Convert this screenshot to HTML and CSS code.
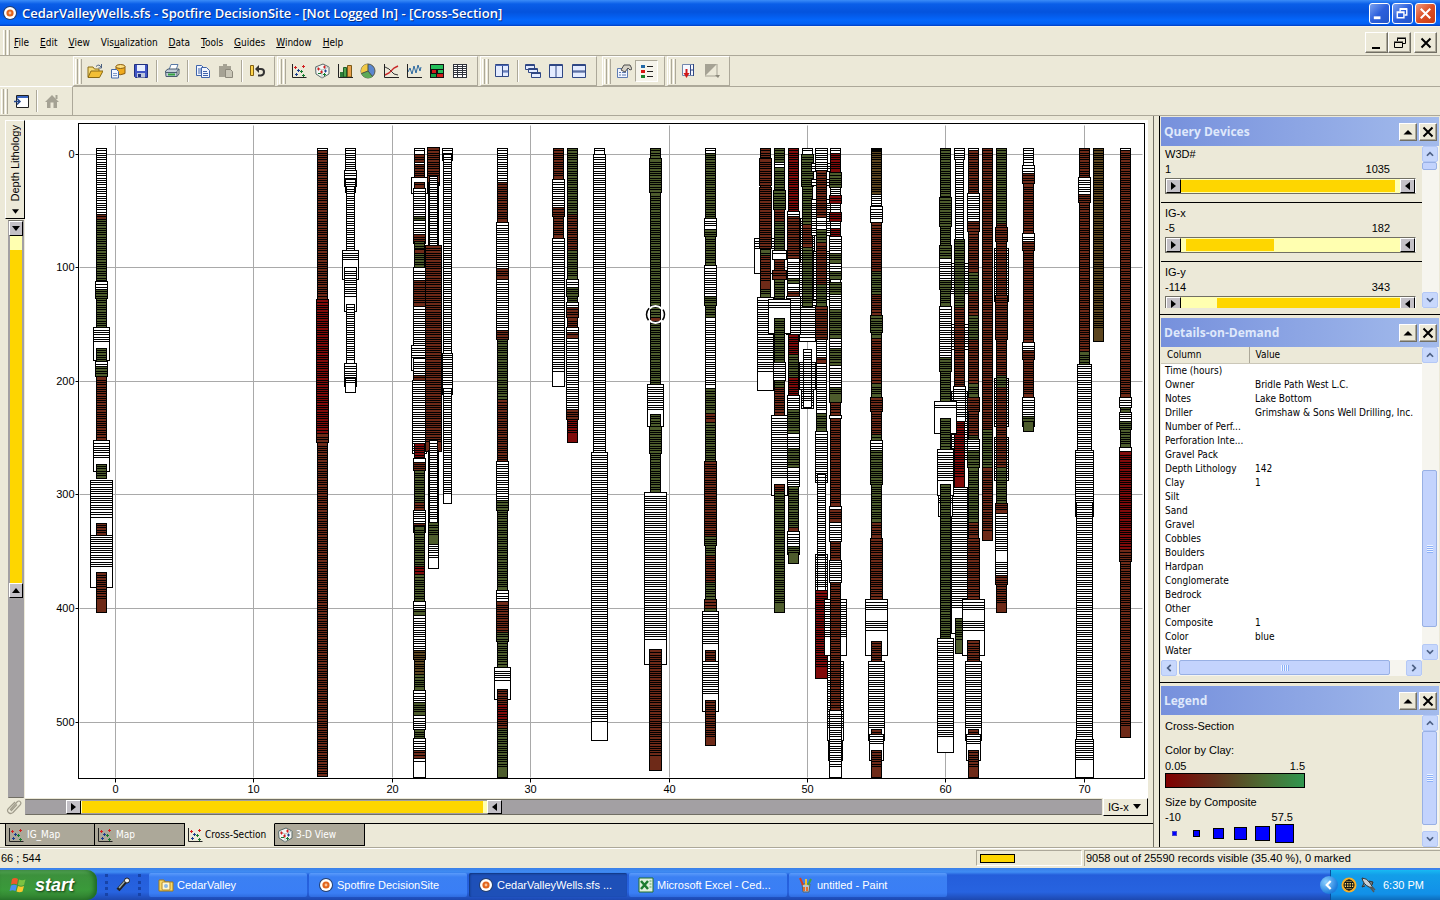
FILE: index.html
```html
<!DOCTYPE html>
<html lang="en">
<head>
    <meta charset="UTF-8">
    <title>CedarValleyWells.sfs - Spotfire DecisionSite</title>
    <link rel="stylesheet" href="styles.css">
</head>
<body>
<svg class="defs" width="0" height="0">
    <symbol id="i-spot" viewBox="0 0 16 16"><circle cx="8" cy="8" r="7" fill="#26406e"/><circle cx="8" cy="8" r="6" fill="#fff"/><circle cx="8" cy="8" r="3.6" fill="#e2641c"/><circle cx="8" cy="8" r="1.4" fill="#f7c39a"/></symbol>
    <symbol id="i-scatter" viewBox="0 0 16 16"><path d="M1.5 1v13.500h14" fill="none" stroke="#222"/><path d="M3 4.500h3M4.500 3v3M11 3.500h3M12.500 2v3" stroke="#d02020"/><path d="M6 7.500h3M7.500 6v3M4 11.500h3M5.500 10v3" stroke="#1a3c8c"/><path d="M9 8.500h3M10.500 7v3M11 12.500h3M12.500 11v3" stroke="#157a30"/></symbol>
    <symbol id="i-cube" viewBox="0 0 16 16"><path d="M1.500 4 9 1l6 3v7l-7 4-6-4z" fill="#f4f6f4" stroke="#5a6a68"/><path d="M1.500 4 8 7l7-3M8 7v8" fill="none" stroke="#b4c0bc"/><path d="M3 6h3M4.500 4.500v3M9 4h3M10.500 2.500v3M6 9h3M7.500 7.500v3" stroke="#d02020"/><path d="M10 8h3M11.500 6.500v3" stroke="#1a3c8c"/><path d="M4 10.500h3M9 11.500h3M10.500 10v3" stroke="#157a30"/></symbol>
    <symbol id="i-up" viewBox="0 0 16 16"><path d="M4.500 10 8 6.500l3.500 3.500" fill="none" stroke="#4d6185" stroke-width="2"/></symbol>
    <symbol id="i-tri" viewBox="0 0 16 16"><path d="M3.500 10.500h9L8 6z"/></symbol>
    <symbol id="i-x" viewBox="0 0 16 16"><path d="M3.500 3.500l9 9m0-9-9 9" stroke="#000" stroke-width="2"/></symbol>
</svg>

<header class="titlebar">
    <svg class="ic"><use href="#i-spot"/></svg>
    <h1>CedarValleyWells.sfs - Spotfire DecisionSite - [Not Logged In] - [Cross-Section]</h1>
    <button class="win" aria-label="Minimize"><svg viewBox="0 0 20 20"><path d="M4 14.500h7" stroke="#fff" stroke-width="3"/></svg></button>
    <button class="win" aria-label="Restore"><svg viewBox="0 0 20 20" fill="none" stroke="#fff"><path d="M7.500 8V5.500h7v6H12M7 5h8" stroke-width="1.500"/><path d="M4.500 8.500h7v6h-7zM4 9h8" stroke-width="1.500"/></svg></button>
    <button class="win close" aria-label="Close"><svg viewBox="0 0 20 20"><path d="M5 5l10 10m0-10L5 15" stroke="#fff" stroke-width="2.200"/></svg></button>
</header>

<nav class="menubar">
    <i class="grip"></i>
    <a href="#"><u>F</u>ile</a><a href="#"><u>E</u>dit</a><a href="#"><u>V</u>iew</a><a href="#">Vis<u>u</u>alization</a><a href="#"><u>D</u>ata</a><a href="#"><u>T</u>ools</a><a href="#"><u>G</u>uides</a><a href="#"><u>W</u>indow</a><a href="#"><u>H</u>elp</a>
    <span class="mdi">
        <button class="raised" aria-label="Minimize window"><svg class="ic" viewBox="0 0 16 16"><path d="M3 13h8" stroke="#000" stroke-width="2"/></svg></button>
        <button class="raised" aria-label="Restore window"><svg class="ic" viewBox="0 0 16 16" fill="none" stroke="#000"><path d="M5.500 6V3.500h8v5H11M5 3h9M2.500 7.500h8v5h-8zM2 7h9"/></svg></button>
        <button class="raised last" aria-label="Close window"><svg class="ic"><use href="#i-x"/></svg></button>
    </span>
</nav>

<div class="toolbar">
    <div class="group">
        <i class="grip"></i>
        <button aria-label="Open"><svg class="ic" viewBox="0 0 16 16"><path d="M1 14V4h5l1.500 2H12v2" fill="#f6dc78" stroke="#8a6a14"/><path d="M1 14.500 4 8h12l-3.500 6.500z" fill="#f2bf35" stroke="#8a6a14"/><path d="M9 3.500q3-3 5 .5M14.500 1v4h-3" fill="none" stroke="#4a5f80"/></svg></button>
        <button aria-label="Open database"><svg class="ic" viewBox="0 0 16 16"><path d="M6 3.500v7q4 2.500 9 0v-7" fill="#f0aa1c" stroke="#8a5c10"/><ellipse cx="10.500" cy="3.500" rx="4.500" ry="2" fill="#ffe080" stroke="#8a5c10"/><path d="M1.500 6.500h5l2 2v6.500h-7z" fill="#f4f7ff" stroke="#4468a8"/><path d="M3 10.500h4M3 12.500h4" stroke="#7f9bcb"/></svg></button>
        <button aria-label="Save"><svg class="ic" viewBox="0 0 16 16"><path d="M1.500 1.500h13v13h-12l-1-1z" fill="#4055c4" stroke="#20307e"/><path d="M4 2h8v6H4z" fill="#e8efff"/><path d="M4 10h8v4.500H4z" fill="#bcc6dc"/><path d="M5 11h3v3H5z" fill="#20307e"/></svg></button>
        <i class="sep"></i>
        <button aria-label="Print"><svg class="ic" viewBox="0 0 16 16"><path d="M5 7 7 1.500h7L12 7z" fill="#fff" stroke="#5878a4"/><path d="M1.500 8 4 6h11l-2 2.500v5h-11z" fill="#c3cdd8" stroke="#485c70"/><path d="M2 9.500h11" stroke="#485c70"/><path d="M4 11.500h7" stroke="#33a340" stroke-width="2"/><path d="M13 13.500 15 11V6" fill="none" stroke="#485c70"/></svg></button>
        <i class="sep"></i>
        <button aria-label="Copy"><svg class="ic" viewBox="0 0 16 16" fill="#f2f6ff" stroke="#3f64aa"><path d="M1.500 2.500h5l3 3v7h-8z"/><path d="M3 6h4M3 8h4M3 10h4"/><path d="M6.500 4.500h5l3 3v7h-8z"/><path d="M8 8.500h4M8 10.500h5M8 12.500h5"/></svg></button>
        <button aria-label="Paste" disabled><svg class="ic" viewBox="0 0 16 16"><path d="M1 3h4V1h4v2h4v11H1z" fill="#a5a294"/><path d="M7.500 6.500h5l2 2v6h-7z" fill="#c9c6b7" stroke="#8c897c"/></svg></button>
        <i class="sep"></i>
        <button aria-label="Undo"><svg class="ic" viewBox="0 0 16 16"><path d="M1.500 2.500h3v10h-3z" fill="#ffd54a" stroke="#806014"/><path d="M7 6h5q3 0 3 3t-3 3.500H9" fill="none" stroke="#333" stroke-width="2"/><path d="M10 2 6 6l4 4z" fill="#333"/></svg></button>
    </div>
    <div class="group">
        <i class="grip"></i>
        <button aria-label="Scatter plot"><svg class="ic"><use href="#i-scatter"/></svg></button>
        <button aria-label="3D scatter plot"><svg class="ic"><use href="#i-cube"/></svg></button>
        <button aria-label="Bar chart"><svg class="ic" viewBox="0 0 16 16"><path d="M3 9h3v5H3z" fill="#2f7d3c"/><path d="M6.500 4.500h3V14h-3z" fill="#4ea24c" stroke="#205c28"/><path d="M10.500 2.500h4V14h-4z" fill="#eaa04a" stroke="#7a5a18"/><path d="M1.500 1v13.500H16" fill="none" stroke="#222"/></svg></button>
        <button aria-label="Pie chart"><svg class="ic" viewBox="0 0 16 16"><circle cx="8" cy="8" r="7" fill="#5a86cf" stroke="#5a5a48"/><path d="M8 8V1a7 7 0 0 0-6.500 9.500z" fill="#f1c945"/><path d="M8 8l-6.500 2.500a7 7 0 0 0 11 3z" fill="#5ca956"/><path d="M8 1v7l4.500 5.500M8 8l-6.500 2.500" fill="none" stroke="#4a5340"/></svg></button>
        <button aria-label="Line chart"><svg class="ic" viewBox="0 0 16 16" fill="none"><path d="M2 4l4 2 5 5 4 1" stroke="#333"/><path d="M2 12l4-2 5-5 4-2" stroke="#c82828" stroke-width="1.400"/><path d="M1.500 1v13.500H16" stroke="#222"/></svg></button>
        <button aria-label="Profile chart"><svg class="ic" viewBox="0 0 16 16" fill="none"><path d="M2 9l2-4 2 6 2-8 2 7 2-8 2 6 1-4" stroke="#2a68a0"/><path d="M1.500 1v13.500H16" stroke="#222"/></svg></button>
        <button aria-label="Heat map"><svg class="ic" viewBox="0 0 16 16"><path d="M1 1h14v14H1z" fill="#111"/><path d="M2 2h12v4H2zM9 7h5v3H9z" fill="#24c05a"/><path d="M2 11h5v3H2z" fill="#15a045"/><path d="M3 7h4v3H3zM8 11h6v3H8z" fill="#d41c1c"/></svg></button>
        <button aria-label="Table"><svg class="ic" viewBox="0 0 16 16"><path d="M1 1h14v14H1z" fill="#fff"/><path d="M1.500 1v14M5.500 1v14M10.500 1v14M14.500 1v14M1 1.500h14M1 3.500h14M1 5.500h14M1 7.500h14M1 9.500h14M1 11.500h14M1 14.500h14" stroke="#30343c"/></svg></button>
    </div>
    <div class="group">
        <i class="grip"></i>
        <button aria-label="Auto tile"><svg class="ic" viewBox="0 0 16 16" fill="#e4ecff" stroke="#2f4784"><path d="M1.500 1.500h13v12h-13zM8.500 2v12M8.500 8h6"/><path d="M1 2.500h14M8.500 9h6" stroke="#4a66b4"/></svg></button>
        <i class="sep"></i>
        <button aria-label="Cascade"><svg class="ic" viewBox="0 0 16 16" fill="#e4ecff" stroke="#2f4784"><path d="M.5 1.500h9v5h-9zM1 2.500h9M3.500 5.500h9v4h-9zM3 6.500h10M6.500 9.500h9v5h-9zM6 10.500h10"/></svg></button>
        <button aria-label="Tile vertically"><svg class="ic" viewBox="0 0 16 16" fill="#e4ecff" stroke="#2f4784"><path d="M1.500 1.500h13v13h-13zM8 2v12M1 2.500h14"/></svg></button>
        <button aria-label="Tile horizontally"><svg class="ic" viewBox="0 0 16 16" fill="#e4ecff" stroke="#2f4784"><path d="M1.500 1.500h13v13h-13zM1 8h14M1 2.500h14M1 9h14"/></svg></button>
    </div>
    <div class="group apart">
        <i class="grip"></i>
        <button aria-label="Properties"><svg class="ic" viewBox="0 0 16 16"><path d="M1.500 5.500h10v9h-10z" fill="#f2f6ff" stroke="#5f7db2"/><path d="M3 9.500h2M6 9.500h4M3 12h2M6 12h4" stroke="#5f7db2"/><path d="M5 7 8 2h6l2 4-2 1-2-2-3 4z" fill="#d6d2c6" stroke="#4c4c4c"/></svg></button>
        <button class="pressed" aria-label="Legend"><svg class="ic" viewBox="0 0 16 16"><path d="M2 2h4v3H2z" fill="#2268a8"/><path d="M2 7h4v3H2z" fill="#d81414"/><path d="M2 12h4v3H2z" fill="#17802c"/><path d="M8 3.500h6M8 8.500h6M8 13.500h6" stroke="#222"/></svg></button>
    </div>
    <div class="group">
        <i class="grip"></i>
        <button aria-label="Export"><svg class="ic" viewBox="0 0 16 16"><path d="M1.500 1.500h11v11h-11z" fill="#f6f8ff" stroke="#7286ac"/><path d="M9.500 2v10M9.500 7h3M12.500 1v12" stroke="#2f4784"/><path d="M5.500 6v6" stroke="#d01818" stroke-width="2"/><path d="M2.500 10h6l-3 5z" fill="#d01818"/></svg></button>
        <button aria-label="Mark" disabled><svg class="ic" viewBox="0 0 16 16"><path d="M1 1h12L1 13z" fill="#a5a294"/><path d="M13 1v12H1" fill="none" stroke="#a5a294"/><path d="M11 12h5l-2 3z" fill="#8c897c"/></svg></button>
    </div>
</div>

<div class="toolbar guide">
    <div class="group">
        <i class="grip"></i>
        <button aria-label="Show guide"><svg class="ic" viewBox="0 0 16 16"><path d="M3.500 2.500h12v12h-12z" fill="#fff" stroke="#222"/><path d="M4 4h11" stroke="#3864c0" stroke-width="2"/><path d="M1 8.500h5M4 5.500l3 3-3 3" fill="none" stroke="#24478c" stroke-width="1.500"/></svg></button>
        <i class="sep"></i>
        <button aria-label="Home" disabled><svg class="ic" viewBox="0 0 16 16"><path d="M8 2l7 7h-2v6H3V9H1z" fill="#a5a294"/><path d="M6.500 9.500h3V15h-3z" fill="#ece9d8"/><path d="M12.500 2v4" stroke="#a5a294" stroke-width="2"/></svg></button>
    </div>
</div>

<main>
    <section class="view">
        <div class="yaxis">
            <button class="axis-label"><span>Depth Lithology</span><svg viewBox="0 0 8 5" width="7" height="5"><path d="M0 0h8L4 5z"/></svg></button>
            <div class="range vertical">
                <div class="span" style="top:0;height:64%"></div>
                <div class="fill" style="top:5%;height:58%"></div>
                <input class="lo" type="range" step="any" value="0" aria-label="Depth from">
                <input class="hi" type="range" step="any" value="64.500" aria-label="Depth to">
            </div>
        </div>
        <svg class="chart" id="chart" role="img" aria-label="Depth Lithology by IG-x"></svg>
        <svg class="ic clip" viewBox="0 0 16 16"><path d="M4 11 11 3q2-2 3.500 0 1 1.500-.5 3L7 13.500q-2.500 2-4.500 0t0-4L9 3M5 12l6-6.500" fill="none" stroke="#a09c8c" stroke-width="1.200"/></svg>
        <div class="xaxis">
            <div class="range dark">
                <div class="span" style="left:4%;width:40%"></div>
                <div class="fill" style="left:5.200%;width:37.300%"></div>
                <input class="lo" type="range" step="any" value="3.800" aria-label="IG-x from">
                <input class="hi" type="range" step="any" value="43.500" aria-label="IG-x to">
            </div>
            <label class="pick"><select aria-label="X axis"><option>IG-x</option></select></label>
        </div>
        <div class="tabs">
            <button><svg class="ic"><use href="#i-scatter"/></svg>IG_Map</button>
            <button><svg class="ic"><use href="#i-scatter"/></svg>Map</button>
            <button class="on"><svg class="ic"><use href="#i-scatter"/></svg>Cross-Section</button>
            <button><svg class="ic"><use href="#i-cube"/></svg>3-D View</button>
        </div>
    </section>

    <aside>
        <section class="panel query">
            <header><h2>Query Devices</h2><button class="raised" aria-label="Collapse"><svg class="ic"><use href="#i-tri"/></svg></button><button class="raised" aria-label="Close"><svg class="ic"><use href="#i-x"/></svg></button></header>
            <div class="body">
                <div class="devices">
                    <div class="device">
                        <h3>W3D#</h3>
                        <p><span>1</span><span>1035</span></p>
                        <div class="range"><div class="span" style="left:0;width:100%"></div><div class="fill" style="left:6%;width:86%"></div>
                            <input class="lo" type="range" value="0" aria-label="W3D# from"><input class="hi" type="range" value="100" aria-label="W3D# to"></div>
                    </div>
                    <div class="device">
                        <h3>IG-x</h3>
                        <p><span>-5</span><span>182</span></p>
                        <div class="range"><div class="span" style="left:0;width:100%"></div><div class="fill" style="left:8%;width:35.500%"></div>
                            <input class="lo" type="range" value="0" aria-label="IG-x from"><input class="hi" type="range" value="100" aria-label="IG-x to"></div>
                    </div>
                    <div class="device">
                        <h3>IG-y</h3>
                        <p><span>-114</span><span>343</span></p>
                        <div class="range"><div class="span" style="left:0;width:100%"></div><div class="fill" style="left:20.500%;width:74%"></div>
                            <input class="lo" type="range" value="0" aria-label="IG-y from"><input class="hi" type="range" value="100" aria-label="IG-y to"></div>
                    </div>
                </div>
                <div class="scroll"><button aria-label="Scroll up"><svg class="ic"><use href="#i-up"/></svg></button><i class="thumb short"></i><button class="down" aria-label="Scroll down"><svg class="ic"><use href="#i-up"/></svg></button></div>
            </div>
        </section>

        <section class="panel details">
            <header><h2>Details-on-Demand</h2><button class="raised" aria-label="Collapse"><svg class="ic"><use href="#i-tri"/></svg></button><button class="raised" aria-label="Close"><svg class="ic"><use href="#i-x"/></svg></button></header>
            <div class="body">
                <div class="list">
                    <table>
                        <thead><tr><th>Column</th><th>Value</th></tr></thead>
                        <tbody>
                            <tr><td>Time (hours)</td><td></td></tr>
                            <tr><td>Owner</td><td>Bridle Path West L.C.</td></tr>
                            <tr><td>Notes</td><td>Lake Bottom</td></tr>
                            <tr><td>Driller</td><td>Grimshaw &amp; Sons Well Drilling, Inc.</td></tr>
                            <tr><td>Number of Perf...</td><td></td></tr>
                            <tr><td>Perforation Inte...</td><td></td></tr>
                            <tr><td>Gravel Pack</td><td></td></tr>
                            <tr><td>Depth Lithology</td><td>142</td></tr>
                            <tr><td>Clay</td><td>1</td></tr>
                            <tr><td>Silt</td><td></td></tr>
                            <tr><td>Sand</td><td></td></tr>
                            <tr><td>Gravel</td><td></td></tr>
                            <tr><td>Cobbles</td><td></td></tr>
                            <tr><td>Boulders</td><td></td></tr>
                            <tr><td>Hardpan</td><td></td></tr>
                            <tr><td>Conglomerate</td><td></td></tr>
                            <tr><td>Bedrock</td><td></td></tr>
                            <tr><td>Other</td><td></td></tr>
                            <tr><td>Composite</td><td>1</td></tr>
                            <tr><td>Color</td><td>blue</td></tr>
                            <tr><td>Water</td><td></td></tr>
                            <tr><td>Type of Water L...</td><td>FALSE</td></tr>
                        </tbody>
                    </table>
                </div>
                <div class="scroll"><button aria-label="Scroll up"><svg class="ic"><use href="#i-up"/></svg></button><i class="thumb mid"></i><button class="down" aria-label="Scroll down"><svg class="ic"><use href="#i-up"/></svg></button></div>
            </div>
            <div class="scroll across"><button class="left" aria-label="Scroll left"><svg class="ic"><use href="#i-up"/></svg></button><i class="thumb"></i><button class="right" aria-label="Scroll right"><svg class="ic"><use href="#i-up"/></svg></button></div>
        </section>

        <section class="panel legend">
            <header><h2>Legend</h2><button class="raised" aria-label="Collapse"><svg class="ic"><use href="#i-tri"/></svg></button><button class="raised" aria-label="Close"><svg class="ic"><use href="#i-x"/></svg></button></header>
            <div class="body">
                <div class="keys">
                    <h3>Cross-Section</h3>
                    <h3>Color by Clay:</h3>
                    <p><span>0.05</span><span>1.5</span></p>
                    <div class="ramp"></div>
                    <h3>Size by Composite</h3>
                    <p class="sizes"><span>-10</span><span>57.5</span></p>
                    <svg class="squares" viewBox="0 0 132 20" width="132" height="20"><g fill="#00f" stroke="#000"><rect x="7.500" y="7.500" width="4" height="4" stroke="#44c"/><rect x="28.500" y="6.500" width="6" height="6"/><rect x="48.500" y="4.500" width="10" height="10"/><rect x="69.500" y="3.500" width="12" height="12"/><rect x="90.500" y="2.500" width="14" height="14"/><rect x="110.500" y=".5" width="18" height="18"/></g></svg>
                </div>
                <div class="scroll"><button aria-label="Scroll up"><svg class="ic"><use href="#i-up"/></svg></button><i class="thumb tall"></i><button class="down" aria-label="Scroll down"><svg class="ic"><use href="#i-up"/></svg></button></div>
            </div>
        </section>
    </aside>
</main>

<div class="status">
    <span>66 ; 544</span>
    <span class="gauge"><i></i></span>
    <span class="records">9058 out of 25590 records visible (35.40 %), 0 marked</span>
</div>

<footer class="taskbar">
    <button class="start"><svg viewBox="0 0 20 18"><path d="M3 3q3-2 6 0L8 8.500q-3-1.500-6 0z" fill="#ee5a2a"/><path d="M10 3.500q3 1.500 6.500 0L15 9q-3 1.500-6 0z" fill="#7cc242"/><path d="M2 9.500q3-1.500 6 0L6.500 15q-3-1.500-6 0z" fill="#4a8ff0"/><path d="M9 10q3 1.500 6 0l-1.500 5.500q-3 1.500-6 0z" fill="#fbc82e"/></svg>start</button>
    <div class="quick"><svg class="ic" viewBox="0 0 16 16"><path d="M3 13 11 4" stroke="#222" stroke-width="4"/><path d="M4 11l6-7" stroke="#9aa" stroke-width="1.500"/><circle cx="12" cy="3.500" r="2.500" fill="#f2f2f2" stroke="#222"/></svg></div>
    <button class="task"><svg class="ic" viewBox="0 0 16 16"><path d="M1 3h5l1 2h8v9H1z" fill="#f8d868" stroke="#a07a18"/><rect x="4" y="5" width="8" height="8" rx="1" fill="#fff7d0" stroke="#b58b28"/><circle cx="8" cy="9" r="2" fill="#8bb8e8"/></svg>CedarValley</button>
    <button class="task"><svg class="ic"><use href="#i-spot"/></svg>Spotfire DecisionSite</button>
    <button class="task on"><svg class="ic"><use href="#i-spot"/></svg>CedarValleyWells.sfs ...</button>
    <button class="task"><svg class="ic" viewBox="0 0 16 16"><path d="M1 1h14v14H1z" fill="#dff0dc" stroke="#22702e"/><path d="M3 4l7 8M10 4l-7 8" stroke="#1e7c30" stroke-width="2.500"/><path d="M11.500 4h2M11.500 7h2M11.500 10h2" stroke="#58a060"/></svg>Microsoft Excel - Ced...</button>
    <button class="task"><svg class="ic" viewBox="0 0 16 16"><path d="M4 7h8l-1 8H5z" fill="#b8c4cc" stroke="#56626a"/><path d="M5 8 2 1" stroke="#d04020" stroke-width="2"/><path d="M8 8V2" stroke="#f0c030" stroke-width="2"/><path d="M10 8l3-6" stroke="#40a040" stroke-width="2"/><path d="M6 10v4M9 10v4" stroke="#e07030" stroke-width="2"/></svg>untitled - Paint</button>
    <div class="tray">
        <button class="chev" aria-label="Show hidden icons"><svg viewBox="0 0 16 16"><path d="M9.500 4.500 6 8l3.500 3.500" fill="none" stroke="#fff" stroke-width="2"/></svg></button>
        <svg class="ic" viewBox="0 0 16 16"><circle cx="8" cy="8" r="7.500" fill="#f6b02a"/><circle cx="8" cy="8" r="5" fill="#ffd86e" stroke="#111"/><path d="M3 8h10M8 3v10M4 5.500h8M4 10.500h8" stroke="#111"/><ellipse cx="8" cy="8" rx="2.500" ry="5" fill="none" stroke="#111"/></svg>
        <svg class="ic" viewBox="0 0 16 16"><path d="M2 1q5 0 8 5l3 5-4-1Q3 7 2 1z" fill="#c9ced4" stroke="#333"/><path d="M4 6 2 10l3-1M9 4l4 1-1 3" fill="#777" stroke="#333"/><path d="M10 10l4 5M12 10l3 3" stroke="#555" stroke-width="1.500"/></svg>
        <time>6:30 PM</time>
    </div>
</footer>
<script src="chart.js"></script>
</body>
</html>
```
FILE: styles.css
```css
*{
    box-sizing: border-box;
    margin: 0;
    padding: 0;
}
body{
    display: flex;
    flex-direction: column;
    height: 100vh;
    overflow: hidden;
    background: #ece9d8;
    color: #000;
    font: 11px/14px "Liberation Sans", Arial, sans-serif;
}
button, select, input{
    font: inherit;
    color: inherit;
    border: 0;
    background: none;
}
h1, h2, h3{
    font-size: inherit;
    font-weight: normal;
}
.defs{
    position: absolute;
}
.ic{
    display: block;
    flex: none;
    width: 16px;
    height: 16px;
}
.raised{
    display: flex;
    align-items: center;
    justify-content: center;
    background: #ece9d8;
    border: 1px solid;
    border-color: #fff #716f64 #716f64 #fff;
    box-shadow: inset -1px -1px #aca899;
}
.menubar, .list, .tabs button{
    font-family: "DejaVu Sans Condensed", "DejaVu Sans", sans-serif;
    font-size: 10px;
}

/* title bar */
.titlebar{
    display: flex;
    align-items: center;
    flex: none;
    height: 27px;
    padding: 0 4px 0 2px;
    gap: 2px;
    background: linear-gradient(#3b8cf8 0, #0a5ee8 4px, #0453dd 12px, #0466fb 20px, #0260f4 24px, #003cc0);
    border-bottom: 1px solid #f4f2e8;
}
.titlebar h1{
    flex: 1;
    padding-left: 2px;
    color: #fff;
    font: 600 13px/18px "Open Sans", sans-serif;
    text-shadow: 1px 1px #0a2f86;
}
.win{
    width: 21px;
    height: 21px;
    border: 1px solid #fff;
    border-radius: 3px;
    background: linear-gradient(135deg, #7ba2f0, #2c5fdc 50%, #2456c8);
}
.win svg{
    display: block;
}
.win.close{
    background: linear-gradient(135deg, #f09a80, #dc4e24 50%, #c83c14);
}

/* menu and toolbars */
.menubar{
    display: flex;
    align-items: center;
    flex: none;
    height: 29px;
    padding-left: 3px;
    padding-top: 3px;
    border-bottom: 1px solid #aca899;
}
.menubar a{
    margin-right: 11px;
    color: #000;
    text-decoration: none;
}
.grip{
    flex: none;
    width: 11px;
    height: 25px;
    background: linear-gradient(90deg, #fff 1px, #ece9d8 1px 2px, #aca899 2px 3px, transparent 3px 4px, #fff 4px 5px, #ece9d8 5px 6px, #aca899 6px 7px, transparent 7px);
}
.mdi{
    display: flex;
    margin-left: auto;
    padding-right: 3px;
}
.mdi .raised{
    width: 23px;
    height: 21px;
}
.mdi .last{
    margin-left: 3px;
}
.toolbar{
    display: flex;
    flex: none;
    gap: 2px;
    height: 30px;
    padding-left: 73px;
}
.group{
    display: flex;
    align-items: center;
    padding-right: 6px;
    border: 1px solid;
    border-color: #fff #aca899 #aca899 #fff;
}
.group.apart{
    margin-left: 3px;
}
.group button{
    display: flex;
    align-items: center;
    justify-content: center;
    width: 23px;
    height: 22px;
}
.group .pressed{
    background: #f6f4ec;
    border: 1px solid;
    border-color: #aca899 #fff #fff #aca899;
}
.sep{
    width: 8px;
    height: 22px;
    background: linear-gradient(90deg, transparent 4px, #aca899 4px 5px, #fff 5px 6px, transparent 6px);
}
.toolbar .grip{
    width: 8px;
    margin-left: 1px;
}
.guide{
    padding-left: 0;
    border-bottom: 1px solid #aca899;
    background: linear-gradient(#aca899, #aca899) 73px 0 / 100% 1px no-repeat;
}
.guide .group{
    width: 73px;
    border-left: 0;
    border-bottom: 0;
}

/* visualization */
main{
    display: grid;
    grid-template-columns: 1fr 281px;
    flex: 1;
    min-height: 0;
    gap: 5px;
}
.view{
    display: grid;
    grid-template: 1fr 18px 7px 24px / 20px 1fr;
    padding: 4px 0 0 5px;
    border-right: 1px solid #716f64;
}
.yaxis{
    display: flex;
    flex-direction: column;
}
.axis-label{
    display: flex;
    flex-direction: column;
    align-items: center;
    justify-content: center;
    gap: 8px;
    height: 99px;
    background: #ece9d8;
    border: 1px solid;
    border-color: #fff #000 #000 #fff;
}
.axis-label span{
    writing-mode: vertical-rl;
    transform: rotate(180deg);
    white-space: nowrap;
}
.chart{
    display: block;
    width: calc(100% - 5px);
    height: 100%;
    background: #fff;
}
.chart text{
    font-size: 11px;
}
.clip{
    margin: 1px;
}
.xaxis{
    display: flex;
    padding-right: 5px;
}
.xaxis .range{
    flex: 1;
    margin: 1px 1px 1px 0;
}
.pick{
    width: 45px;
    border: 1px solid;
    border-color: #fff #000 #000 #fff;
}
.pick select{
    width: 100%;
    height: 100%;
    padding-left: 4px;
    appearance: none;
    background: url("data:image/svg+xml,%3Csvg xmlns='http://www.w3.org/2000/svg' width='8' height='5'%3E%3Cpath d='M0 0h8L4 5z'/%3E%3C/svg%3E") 29px 5px no-repeat;
}
.range{
    position: relative;
    height: 16px;
    border: 1px solid;
    border-color: #716f64 #fff #716f64 #716f64;
    background: #ffffb0;
    overflow: hidden;
}
.range.dark, .range.vertical{
    background: #a3a0a3;
    border-color: #716f64 #a3a0a3;
}
.range .span, .range .fill{
    position: absolute;
    top: 1px;
    bottom: 1px;
    background: #ffffb0;
}
.range .fill{
    background: #fed600;
}
.range input{
    position: absolute;
    top: 0;
    left: 0;
    width: 100%;
    height: 100%;
    appearance: none;
    pointer-events: none;
}
.range input::-webkit-slider-thumb{
    appearance: none;
    pointer-events: auto;
    width: 15px;
    height: 14px;
    border: 1px solid;
    border-color: #fff #000 #000 #fff;
    background: #c3c0c6 url("data:image/svg+xml,%3Csvg xmlns='http://www.w3.org/2000/svg' width='5' height='8'%3E%3Cpath d='M0 0v8l5-4z'/%3E%3C/svg%3E") center no-repeat;
}
.range .hi::-webkit-slider-thumb{
    background-image: url("data:image/svg+xml,%3Csvg xmlns='http://www.w3.org/2000/svg' width='5' height='8'%3E%3Cpath d='M5 0v8L0 4z'/%3E%3C/svg%3E");
}
.range.vertical{
    flex: 1;
    width: 16px;
    height: auto;
    margin: 1px 0 0 3px;
}
.vertical .span, .vertical .fill{
    left: 1px;
    right: 1px;
    bottom: auto;
}
.vertical input{
    writing-mode: vertical-lr;
}
.vertical input::-webkit-slider-thumb{
    width: 14px;
    height: 15px;
    background-image: url("data:image/svg+xml,%3Csvg xmlns='http://www.w3.org/2000/svg' width='8' height='5'%3E%3Cpath d='M0 0h8L4 5z'/%3E%3C/svg%3E");
}
.vertical .hi::-webkit-slider-thumb{
    background-image: url("data:image/svg+xml,%3Csvg xmlns='http://www.w3.org/2000/svg' width='8' height='5'%3E%3Cpath d='M0 5h8L4 0z'/%3E%3C/svg%3E");
}
.tabs{
    grid-area: 4 / 1 / 5 / 3;
    display: flex;
    margin-left: -5px;
    padding-left: 5px;
    background: linear-gradient(#000, #000) 0 0 / 100% 1px no-repeat;
}
.tabs button{
    display: flex;
    align-items: center;
    gap: 3px;
    width: 90px;
    height: 23px;
    padding-left: 2px;
    color: #fff;
    background: #aca899;
    border: 1px solid #000;
    border-left-width: 0;
    white-space: nowrap;
}
.tabs button:first-child{
    border-left-width: 1px;
}
.tabs .on{
    color: #000;
    gap: 2px;
    background: #ece9d8;
    border-top-color: #ece9d8;
    border-bottom: 0;
}

/* side panels */
aside{
    display: grid;
    grid-template-rows: 199px 1fr 162px;
    gap: 2px;
    min-height: 0;
    border-left: 1px solid #000;
}
.panel{
    display: flex;
    flex-direction: column;
    min-height: 0;
    padding: 1px 1px 6px;
    border-bottom: 1px solid #000;
}
.panel header{
    display: flex;
    align-items: center;
    flex: none;
    height: 29px;
    padding: 0 2px 0 3px;
    gap: 2px;
    background: linear-gradient(90deg, #7690dc, #a3bbec);
}
.panel h2{
    flex: 1;
    color: #dfe8fb;
    font: bold 12px/16px "Open Sans", sans-serif;
}
.panel header .raised{
    width: 18px;
    height: 18px;
}
.panel .body{
    display: flex;
    flex: 1;
    min-height: 0;
}
.devices, .keys{
    flex: 1;
    min-width: 0;
    overflow: hidden;
}
.devices{
    margin-top: -2px;
}
.device{
    height: 59px;
    padding: 3px 6px 0 4px;
    border-bottom: 1px solid #000;
}
.device p{
    display: flex;
    justify-content: space-between;
    padding-right: 26px;
    line-height: 16px;
}
.device .range{
    margin-top: 1px;
}
.scroll{
    display: flex;
    flex-direction: column;
    flex: none;
    width: 17px;
    background: #f6f5ef;
}
.scroll button{
    flex: none;
    width: 16px;
    height: 16px;
    border: 1px solid #b4c8f6;
    border-radius: 2px;
    background: #c8d8fc;
}
.scroll button svg{
    width: 14px;
    height: 14px;
}
.scroll .down{
    margin-top: auto;
    transform: rotate(180deg);
}
.thumb{
    width: 15px;
    border: 1px solid #98b0e4;
    border-radius: 2px;
    background: repeating-linear-gradient(#eef4ff 0 1px, #8cb0f8 1px 2px) center / 6px 8px no-repeat, #c3d3fd;
}
.thumb.short{
    height: 8px;
    background: #c3d3fd;
}
.thumb.mid{
    height: 157px;
    margin-top: 107px;
}
.thumb.tall{
    flex: 1;
    margin-bottom: 6px;
}
.scroll.across{
    flex-direction: row;
    width: auto;
    height: 16px;
    margin-right: 17px;
}
.across .thumb{
    flex: 1;
    height: 15px;
    margin: 0 16px 0 2px;
    background: repeating-linear-gradient(90deg, #eef4ff 0 1px, #8cb0f8 1px 2px) center / 8px 6px no-repeat, #c3d3fd;
}
.across .left{
    transform: rotate(-90deg);
}
.across .right{
    transform: rotate(90deg);
}
.list{
    flex: 1;
    min-width: 0;
    overflow: hidden;
    background: #fff;
}
.list table{
    width: 100%;
    table-layout: fixed;
    border-collapse: collapse;
}
.list th{
    height: 16px;
    padding-left: 6px;
    background: #ece9d8;
    border-bottom: 1px solid #cbc7b8;
    font-weight: normal;
    text-align: left;
}
.list th:first-child{
    width: 88px;
    border-right: 1px solid #aca899;
}
.list td{
    height: 14px;
    padding-left: 4px;
    white-space: nowrap;
}
.list td + td{
    padding-left: 6px;
}
.keys{
    padding: 4px 0 0 4px;
}
.keys h3{
    margin-bottom: 10px;
}
.keys h3:nth-child(2){
    margin-bottom: 2px;
}
.keys p{
    display: flex;
    justify-content: space-between;
    width: 140px;
}
.keys .ramp{
    width: 140px;
    height: 15px;
    margin-bottom: 7px;
    border: 1px solid #000;
    background: linear-gradient(90deg, #800000, #62301c 35%, #4d6b32 70%, #30964e);
}
.keys .ramp + h3{
    margin-bottom: 2px;
}
.keys .sizes{
    width: 128px;
    line-height: 13px;
}
.squares{
    display: block;
}
.legend{
    padding-bottom: 0;
    border-bottom: 0;
}

/* status and taskbar */
.status{
    display: flex;
    align-items: center;
    flex: none;
    height: 21px;
    padding-left: 1px;
    border-top: 1px solid #aca899;
    box-shadow: inset 0 1px #fff;
}
.gauge{
    display: flex;
    align-items: center;
    width: 106px;
    height: 16px;
    margin-left: auto;
    padding-left: 3px;
    border: 1px solid;
    border-color: #aca899 #fff #fff #aca899;
}
.gauge i{
    width: 35px;
    height: 9px;
    border: 1px solid #000;
    background: #fed600;
}
.records{
    width: 356px;
    height: 16px;
    margin-left: 2px;
    padding-left: 1px;
    border-left: 1px solid #aca899;
    border-top: 1px solid #aca899;
}
.taskbar{
    display: flex;
    align-items: center;
    flex: none;
    height: 32px;
    padding-top: 2px;
    color: #fff;
    background: linear-gradient(#3a80e8 0, #3f8cf3 4px, #245edb 7px, #2763e0 24px, #1d48b0);
}
.start{
    display: flex;
    align-items: center;
    gap: 6px;
    width: 97px;
    height: 30px;
    padding-left: 9px;
    border-radius: 0 10px 10px 0;
    background: linear-gradient(#5eac5e 0, #3c913c 5px, #3a9a3a 20px, #2f7c2f);
    box-shadow: inset -3px 0 4px #1f6a24;
    font: italic bold 18px/24px "Liberation Sans", Arial, sans-serif;
    text-shadow: 1px 1px 2px #143c14;
}
.start svg{
    width: 20px;
    height: 18px;
}
.quick{
    display: flex;
    align-items: center;
    justify-content: center;
    width: 36px;
    height: 22px;
    margin: 0 8px;
    border: dotted #1743a8;
    border-width: 0 3px;
}
.task{
    display: flex;
    align-items: center;
    gap: 3px;
    flex: 0 1 158px;
    height: 24px;
    margin-right: 2px;
    padding-left: 9px;
    border-radius: 2px;
    background: linear-gradient(#5a9bfb, #3b80f3 4px, #3a7ef5 20px, #2f6ce0);
    white-space: nowrap;
}
.task.on{
    background: #1e50b8;
    box-shadow: inset 1px 1px 2px #10357e;
}
.tray{
    display: flex;
    align-items: center;
    gap: 3px;
    width: 110px;
    height: 30px;
    margin-left: auto;
    background: linear-gradient(#18b9f2 0, #139ee9 5px, #1290e8 24px, #0d6cbc);
    border-left: 1px solid #0a4e9c;
}
.chev{
    flex: none;
    width: 18px;
    height: 18px;
    margin-left: -11px;
    border-radius: 50%;
    background: radial-gradient(circle at 6px 6px, #8cd0ff, #1c7cdc 70%);
}
.chev svg{
    display: block;
}
.tray time{
    margin-left: 4px;
}
```
FILE: chart.js
```js
// fill colours of the records (by clay), W = no clay value
var fills = {W: "#ffffff", G: "#4d5c2c", R: "#6e2a18", D: "#800a0a", B: "#5c451e", K: "#000000"};

// one string per well: top-bottom, colour and bar width, then the start of
// the tall last record after "/" if there is one. Depth 0 is at row 154.
var wells = [
    [-1, "149-215W11 215-220R11 220-299G11 282-290W13 290-299G13 299-328G11 328-361W17/345 349-362G11 362-367W13 367-377G13 377-441R11 441-472W17/461 465-479G11 481-518W23 518-536W23/518 524-536R11 536-588W23/567 573-613R11/602"],
    [15, "149-152W11 151-300R11 300-434D13 434-443R13 443-777R11"],
    [17, "149-171W11 171-187W13 180-193W11 187-251W9 251-280W17/264 268-312W13/300 305-364W9 364-387W13 379-393W11/383"],
    [24, "149-161W11/154 155-354W9 354-395W11/389 389-504W9/496"],
    [22, "149-155W11 155-163R11 163-165W11 165-178R11 178-194W17/179 183-189R11 189-217W13 217-221G13 221-235W13 235-244R13 242-268G11 250-254R11 268-281W13 281-307R13 307-347W13 346-371W17/361 359-376W13 376-381R13 381-454W15 444-458D11 459-463W13 463-471R13 471-503G11 503-511R11 511-524W13 524-533R13 527-567G11 567-575D11 575-602G11 602-610W13 610-616G13 616-651W13 651-660B13 660-675B11 675-691G11 691-703W13 703-716G13 716-730W13 730-739G11 739-751W13 751-759R13 759-778W13/766"],
    [23, "148-186R13/176 183-246W11 177-246W9 246-452R17/442 451-530W11 441-523W9 523-545G11/535 545-569W11/558"],
    [28, "149-183W11 183-223R11 223-269W13 269-280R13 280-331W13 331-340R13 340-400G11 400-462R11 462-501W13 501-511G13 511-591G11 591-602W13 602-633R13 633-642G13 642-668G11 668-700W17/684 690-705R11 705-720D11 720-729R11 729-778G11/767"],
    [32, "149-180R11 180-208W13 208-217R13 217-239R11 239-387W13/375"],
    [33, "149-215G11 215-251R11 251-280G11 280-288W13 288-297G13 297-303G11 303-308W13 308-318R13 318-328R11 328-333W13 333-339R13 339-410W13 410-420R13 420-443D11/433"],
    [35, "149-155W11 155-453W13 453-741W17/725"],
    [39, "149-159G11 159-193G13 193-318G11 318-324R11 324-385G11 385-427W17/410 415-427G11 427-454G13 454-493G11 493-665W23/643 650-771R13/759"],
    [43, "149-154W11 154-219G11 219-230W13 230-237G13 237-266G11 266-297W13 297-306G13 306-318G11 318-389W11 389-414G11 414-423R11 423-462G11 462-537R13 537-546G13 546-556G11 556-583R11 583-600G11 600-609R13 609-612G13 612-662W17/646 651-662R11 662-712W17/696 701-746R11/737"],
    [47, "239-274W23/252 149-250R11 159-186R13 188-249R13 250-256G11 256-281R11 281-290R11/281 290-298G11 298-391W17/375"],
    [50, "219-263W15 263-306W23 306-342W17/341 363-390W17 390-409W13 149-155W11 155-187G13 187-225G11 225-248R11 248-307G11 350-408W9/401"],
    [49, "149-212D11 212-217W13 217-259R13 259-279W13 279-284G13 284-292W13 292-297R13 297-335W15 335-355D11 355-378G11 378-396D11 396-410W13 410-434G13 434-449W13 449-468G13 468-487W13 487-528G11 528-532R11 532-547W13 547-555G13 553-564G11/553"],
    [48, "149-163G11 163-168W11 168-210G11 191-210G13 210-222R11 222-251G11 251-260W15/254 260-280R11 271-280R15 280-299G11 300-334W23/311 319-363G11 363-381W13 381-388G11 388-416R11 416-496W17/480 485-492R11 492-613G11/603"],
    [51, "164-172W21 180-186W21 200-236W21 252-300W17 149-171W13 171-218R11 218-230W11 230-243G11 243-285R11 285-307G11 307-340R13 340-358W11 358-364R11 364-414W11 414-432G11 432-483W13 475-555W9 555-591W13 556-591W9 591-679D13/667"],
    [52, "600-656W23/641 662-741W17/730 741-761W15 149-154W11 154-173D11 173-188G13 188-196W11 196-204D13 204-213W11 213-222D13 222-229W11 229-237D11 237-254W13 254-264G13 264-272W13 272-280G13 280-283W11 283-295G13 295-310W13 310-339G13 339-349W13 349-366G13 366-388W13 388-403G13/394 403-416R11 416-419W13 419-507R11 507-510W13 510-523R13 523-542W13 542-561R11 561-583W13 583-711R11 711-778W13/767"],
    [55, "149-152K11 152-195B11 195-223W11 207-223W13 223-272R11 272-295G11 295-316R11 316-333G13 333-339G11 339-384R11 384-398G11 398-412R13 412-435R11 435-441G11 441-451W13 451-485G13 485-523G11 523-539R11 539-600R13 600-622W23/613 622-656W23/634 642-662R11 662-741W17/730 730-736R11 735-761W15/748 751-778R11/767"],
    [61, "264-294W19 325-350W19 392-460W17 149-160W11 160-240W9 240-308G11 308-388R11 387-422W13/417 422-477D11 477-488D11/478 488-634W17/611 619-654G9/643"],
    [60, "149-259G11 198-227G13 246-259G13 259-281W13 281-290G13 290-307G11 307-358W13 358-372G13 372-402G11 402-434W23/411 419-450G11 450-496W17/481 496-517W15/503 485-640G11 639-753W17/737"],
    [62, "149-151W11 151-194R11 194-222W13 222-232R13 232-273R11 273-292G11 292-316R11 316-340G11 340-384R11 384-398G11 398-412R13 412-436R11 436-440G11 440-451W13 451-468G13 468-523G11 523-539R11 539-600R13 600-622W23/613 622-656W23/634 641-662R13 662-741W17/730 730-735R11 735-761W15/748 751-778R11/767"],
    [63, "149-430R11 430-468G11 468-541R11/531"],
    [64, "249-302W15 379-427W15 438-481W15 149-224G11 224-376R11 228-242R13 296-340R13 376-388G11 388-468R11 468-504G11 504-514R13 514-563W13/551 563-576W13 576-585R13 585-613R11/603"],
    [66, "149-166W11 166-174W13 174-184R13 184-234R11 234-242W13 242-251R13 251-343R11 343-351W13 351-360R13 360-398R11 398-417W13 417-427G13 422-432G11/422"],
    [70, "149-178R11 178-195W13 195-203R13 203-352R11 352-365G11 365-451W15 451-517W19 503-740W17 740-778W19/763"],
    [71, "149-342B11/332"],
    [73, "149-151W11 151-398R11 398-408W13 408-413G11 413-422W13 422-430G13 430-448G11 448-452W13 452-550D13 550-562R13 562-738R11/729"]
];

var svg = document.getElementById("chart");

function add(name, attrs, text) {
    var el = document.createElementNS("http://www.w3.org/2000/svg", name);
    for (var key in attrs) {
        el.setAttribute(key, attrs[key]);
    }
    if (text !== undefined) {
        el.textContent = text;
    }
    svg.appendChild(el);
}

function draw() {
    svg.innerHTML = "";
    var w = svg.clientWidth;
    var h = svg.clientHeight;
    var left = 53.5, right = w - 3.5, top = 3.5, bottom = h - 19.5;
    var xStep = (right - left) / 77;
    var yScale = (bottom - top) / 655;

    function px(v) { return Math.round(left + (v + 2.62) * xStep) + 0.5; }
    function py(row) { return Math.floor(top + (row - 124) * yScale) + 0.5; }

    add("rect", {x: left, y: top, width: right - left, height: bottom - top, fill: "#fff", stroke: "#000", "shape-rendering": "crispEdges"});

    // grid and tick labels
    for (var v = 0; v <= 70; v += 10) {
        add("path", {d: "M" + px(v) + " " + (top + 2) + "V" + (bottom - 1), stroke: "#a9a9a9"});
        add("path", {d: "M" + px(v) + " " + bottom + "v4", stroke: "#000"});
        add("text", {x: px(v), y: bottom + 14, "text-anchor": "middle"}, v);
    }
    for (var d = 0; d <= 500; d += 100) {
        var y = py(154.5 + d * 1.136);
        add("path", {d: "M" + (left + 1) + " " + y + "H" + (right - 2), stroke: "#a9a9a9"});
        add("path", {d: "M" + (left - 3) + " " + y + "h3", stroke: "#000"});
        add("text", {x: left - 4, y: y + 3, "text-anchor": "end"}, d);
    }

    for (var i = 0; i < wells.length; i++) {
        var x = px(wells[i][0]);
        wells[i][1].split(" ").forEach(function (part) {
            var m = part.match(/(\d+)-(\d+)([A-Z])(\d+)(?:\/(\d+))?/);
            var y1 = py(+m[1]), y2 = Math.min(py(+m[2]), bottom);
            var half = (m[4] - 1) / 2;
            add("rect", {x: x - half, y: y1, width: half * 2, height: y2 - y1, fill: fills[m[3]], stroke: "#000", "shape-rendering": "crispEdges"});
            // a record every two feet
            var end = m[5] ? py(+m[5]) : y2;
            var lines = "";
            for (var k = 0; k < 300; k++) {
                var ly = py(149 + k * 2.272);
                if (ly > y1 + 1 && (ly < end - 1 || ly == end)) {
                    lines += "M" + (x - half) + " " + ly + "h" + half * 2;
                }
            }
            if (lines) {
                add("path", {d: lines, stroke: "#000", "shape-rendering": "crispEdges"});
            }
        });
    }

    // highlighted record
    add("circle", {cx: px(39), cy: py(315), r: 8.5, fill: "none", stroke: "#fff", "stroke-width": 2});
    add("circle", {cx: px(39), cy: py(315), r: 9, fill: "none", stroke: "#000", "stroke-width": 1.5, "stroke-dasharray": "6 16 13 16 6 0"});
}

draw();
window.onresize = draw;
```
